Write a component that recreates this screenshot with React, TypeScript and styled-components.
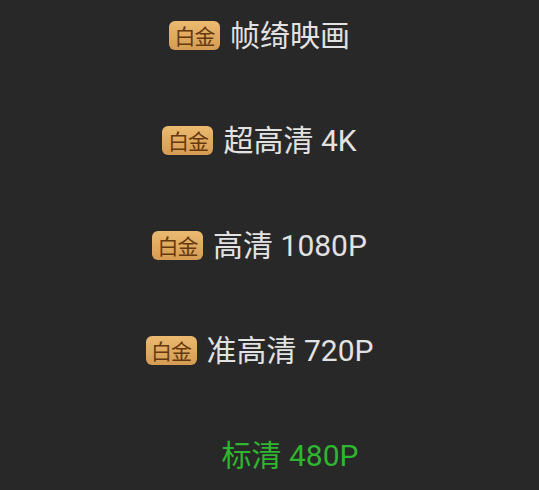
import React from "react";
import styled, { createGlobalStyle } from "styled-components";

const GlobalStyle = createGlobalStyle`
  html, body {
    margin: 0;
    padding: 0;
    background: #282828;
  }
`;

const Wrap = styled.ul`
  display: flex;
  flex-direction: column;
  align-items: center;
  gap: 66px;
  width: 539px;
  height: 490px;
  margin: 0;
  padding: 16px 20px 0 0;
  box-sizing: border-box;
  list-style: none;
  overflow: hidden;
  font-family: Roboto, "Noto Sans CJK SC", "Noto Sans", sans-serif;
`;

const Row = styled.li`
  display: flex;
  align-items: center;
  gap: 10px;
  height: 39px;
`;

const Badge = styled.span<{ hidden?: boolean }>`
  display: inline-flex;
  align-items: center;
  justify-content: center;
  width: 51px;
  height: 29px;
  border-radius: 6px;
  background: linear-gradient(180deg, #ebba70 0%, #d59c52 100%);
  color: #65380f;
  font-family: "Noto Sans CJK SC", sans-serif;
  font-size: 21px;
  font-weight: 400;
  line-height: 1;
  letter-spacing: -1px;
  visibility: ${(props) => (props.hidden ? "hidden" : "visible")};
`;

const Label = styled.span<{ active?: boolean }>`
  font-size: 30px;
  line-height: 39px;
  color: ${(props) => (props.active ? "#2fb52f" : "#e2e2e2")};
`;

const qualityList = [
  { title: "帧绮映画", vip: true },
  { title: "超高清 4K", vip: true },
  { title: "高清 1080P", vip: true },
  { title: "准高清 720P", vip: true },
  { title: "标清 480P", vip: false, active: true },
];

function App() {
  return (
    <>
      <GlobalStyle />
      <Wrap>
        {qualityList.map((item, index) => (
          <Row key={`quality-${index}`}>
            <Badge hidden={!item.vip}>白金</Badge>
            <Label active={item.active}>{item.title}</Label>
          </Row>
        ))}
      </Wrap>
    </>
  );
}

export default App;
